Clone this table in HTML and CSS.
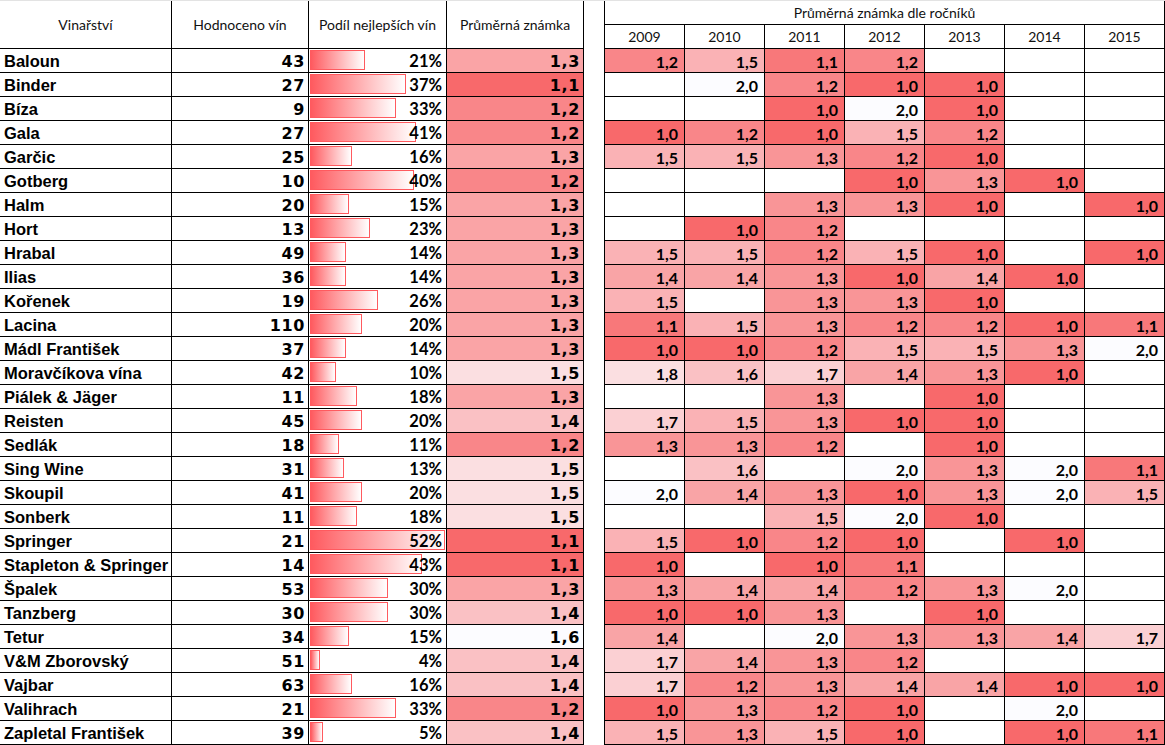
FILE: index.html
```html
<!DOCTYPE html>
<html lang="cs">
<head>
<meta charset="utf-8">
<title>Vinařství</title>
<link rel="stylesheet" href="styles.css">
</head>
<body>
<div class="sheet">
  <div class="left">
    <div class="hd">Vinařství</div>
    <div class="hd">Hodnoceno vín</div>
    <div class="hd">Podíl nejlepších vín</div>
    <div class="hd">Průměrná známka</div>

    <div class="name">Baloun</div><div class="num">43</div><div class="pct"><span class="bar" style="width:55px"></span><span class="pv">21%</span></div><div class="mark m13">1,3</div>
    <div class="name">Binder</div><div class="num">27</div><div class="pct"><span class="bar" style="width:96px"></span><span class="pv">37%</span></div><div class="mark m11">1,1</div>
    <div class="name">Bíza</div><div class="num">9</div><div class="pct"><span class="bar" style="width:86px"></span><span class="pv">33%</span></div><div class="mark m12">1,2</div>
    <div class="name">Gala</div><div class="num">27</div><div class="pct"><span class="bar" style="width:106px"></span><span class="pv">41%</span></div><div class="mark m12">1,2</div>
    <div class="name">Garčic</div><div class="num">25</div><div class="pct"><span class="bar" style="width:42px"></span><span class="pv">16%</span></div><div class="mark m13">1,3</div>
    <div class="name">Gotberg</div><div class="num">10</div><div class="pct"><span class="bar" style="width:104px"></span><span class="pv">40%</span></div><div class="mark m12">1,2</div>
    <div class="name">Halm</div><div class="num">20</div><div class="pct"><span class="bar" style="width:39px"></span><span class="pv">15%</span></div><div class="mark m13">1,3</div>
    <div class="name">Hort</div><div class="num">13</div><div class="pct"><span class="bar" style="width:60px"></span><span class="pv">23%</span></div><div class="mark m13">1,3</div>
    <div class="name">Hrabal</div><div class="num">49</div><div class="pct"><span class="bar" style="width:36px"></span><span class="pv">14%</span></div><div class="mark m13">1,3</div>
    <div class="name">Ilias</div><div class="num">36</div><div class="pct"><span class="bar" style="width:36px"></span><span class="pv">14%</span></div><div class="mark m13">1,3</div>
    <div class="name">Kořenek</div><div class="num">19</div><div class="pct"><span class="bar" style="width:68px"></span><span class="pv">26%</span></div><div class="mark m13">1,3</div>
    <div class="name">Lacina</div><div class="num">110</div><div class="pct"><span class="bar" style="width:52px"></span><span class="pv">20%</span></div><div class="mark m13">1,3</div>
    <div class="name">Mádl František</div><div class="num">37</div><div class="pct"><span class="bar" style="width:36px"></span><span class="pv">14%</span></div><div class="mark m13">1,3</div>
    <div class="name">Moravčíkova vína</div><div class="num">42</div><div class="pct"><span class="bar" style="width:26px"></span><span class="pv">10%</span></div><div class="mark m15">1,5</div>
    <div class="name">Piálek &amp; Jäger</div><div class="num">11</div><div class="pct"><span class="bar" style="width:47px"></span><span class="pv">18%</span></div><div class="mark m13">1,3</div>
    <div class="name">Reisten</div><div class="num">45</div><div class="pct"><span class="bar" style="width:52px"></span><span class="pv">20%</span></div><div class="mark m14">1,4</div>
    <div class="name">Sedlák</div><div class="num">18</div><div class="pct"><span class="bar" style="width:29px"></span><span class="pv">11%</span></div><div class="mark m12">1,2</div>
    <div class="name">Sing Wine</div><div class="num">31</div><div class="pct"><span class="bar" style="width:34px"></span><span class="pv">13%</span></div><div class="mark m15">1,5</div>
    <div class="name">Skoupil</div><div class="num">41</div><div class="pct"><span class="bar" style="width:52px"></span><span class="pv">20%</span></div><div class="mark m15">1,5</div>
    <div class="name">Sonberk</div><div class="num">11</div><div class="pct"><span class="bar" style="width:47px"></span><span class="pv">18%</span></div><div class="mark m15">1,5</div>
    <div class="name">Springer</div><div class="num">21</div><div class="pct"><span class="bar" style="width:135px"></span><span class="pv">52%</span></div><div class="mark m11">1,1</div>
    <div class="name">Stapleton &amp; Springer</div><div class="num">14</div><div class="pct"><span class="bar" style="width:112px"></span><span class="pv">43%</span></div><div class="mark m11">1,1</div>
    <div class="name">Špalek</div><div class="num">53</div><div class="pct"><span class="bar" style="width:78px"></span><span class="pv">30%</span></div><div class="mark m13">1,3</div>
    <div class="name">Tanzberg</div><div class="num">30</div><div class="pct"><span class="bar" style="width:78px"></span><span class="pv">30%</span></div><div class="mark m14">1,4</div>
    <div class="name">Tetur</div><div class="num">34</div><div class="pct"><span class="bar" style="width:39px"></span><span class="pv">15%</span></div><div class="mark m16">1,6</div>
    <div class="name">V&amp;M Zborovský</div><div class="num">51</div><div class="pct"><span class="bar" style="width:10px"></span><span class="pv">4%</span></div><div class="mark m14">1,4</div>
    <div class="name">Vajbar</div><div class="num">63</div><div class="pct"><span class="bar" style="width:42px"></span><span class="pv">16%</span></div><div class="mark m14">1,4</div>
    <div class="name">Valihrach</div><div class="num">21</div><div class="pct"><span class="bar" style="width:86px"></span><span class="pv">33%</span></div><div class="mark m12">1,2</div>
    <div class="name">Zapletal František</div><div class="num">39</div><div class="pct"><span class="bar" style="width:13px"></span><span class="pv">5%</span></div><div class="mark m14">1,4</div>
  </div>

  <div class="right">
    <div class="title">Průměrná známka dle ročníků</div>
    <div class="yr">2009</div><div class="yr">2010</div><div class="yr">2011</div><div class="yr">2012</div><div class="yr">2013</div><div class="yr">2014</div><div class="yr">2015</div>

    <div class="v c12">1,2</div><div class="v c15">1,5</div><div class="v c11">1,1</div><div class="v c12">1,2</div><div class="v"></div><div class="v"></div><div class="v"></div>
    <div class="v"></div><div class="v c20">2,0</div><div class="v c12">1,2</div><div class="v c10">1,0</div><div class="v c10">1,0</div><div class="v"></div><div class="v"></div>
    <div class="v"></div><div class="v"></div><div class="v c10">1,0</div><div class="v c20">2,0</div><div class="v c10">1,0</div><div class="v"></div><div class="v"></div>
    <div class="v c10">1,0</div><div class="v c12">1,2</div><div class="v c10">1,0</div><div class="v c15">1,5</div><div class="v c12">1,2</div><div class="v"></div><div class="v"></div>
    <div class="v c15">1,5</div><div class="v c15">1,5</div><div class="v c13">1,3</div><div class="v c12">1,2</div><div class="v c10">1,0</div><div class="v"></div><div class="v"></div>
    <div class="v"></div><div class="v"></div><div class="v"></div><div class="v c10">1,0</div><div class="v c13">1,3</div><div class="v c10">1,0</div><div class="v"></div>
    <div class="v"></div><div class="v"></div><div class="v c13">1,3</div><div class="v c13">1,3</div><div class="v c10">1,0</div><div class="v"></div><div class="v c10">1,0</div>
    <div class="v"></div><div class="v c10">1,0</div><div class="v c12">1,2</div><div class="v"></div><div class="v"></div><div class="v"></div><div class="v"></div>
    <div class="v c15">1,5</div><div class="v c15">1,5</div><div class="v c12">1,2</div><div class="v c15">1,5</div><div class="v c10">1,0</div><div class="v"></div><div class="v c10">1,0</div>
    <div class="v c14">1,4</div><div class="v c14">1,4</div><div class="v c13">1,3</div><div class="v c10">1,0</div><div class="v c14">1,4</div><div class="v c10">1,0</div><div class="v"></div>
    <div class="v c15">1,5</div><div class="v"></div><div class="v c13">1,3</div><div class="v c13">1,3</div><div class="v c10">1,0</div><div class="v"></div><div class="v"></div>
    <div class="v c11">1,1</div><div class="v c15">1,5</div><div class="v c13">1,3</div><div class="v c12">1,2</div><div class="v c12">1,2</div><div class="v c10">1,0</div><div class="v c11">1,1</div>
    <div class="v c10">1,0</div><div class="v c10">1,0</div><div class="v c12">1,2</div><div class="v c15">1,5</div><div class="v c15">1,5</div><div class="v c13">1,3</div><div class="v c20">2,0</div>
    <div class="v c18">1,8</div><div class="v c16">1,6</div><div class="v c17">1,7</div><div class="v c14">1,4</div><div class="v c13">1,3</div><div class="v c10">1,0</div><div class="v"></div>
    <div class="v"></div><div class="v"></div><div class="v c13">1,3</div><div class="v"></div><div class="v c10">1,0</div><div class="v"></div><div class="v"></div>
    <div class="v c17">1,7</div><div class="v c15">1,5</div><div class="v c13">1,3</div><div class="v c10">1,0</div><div class="v c10">1,0</div><div class="v"></div><div class="v"></div>
    <div class="v c13">1,3</div><div class="v c13">1,3</div><div class="v c12">1,2</div><div class="v"></div><div class="v c10">1,0</div><div class="v"></div><div class="v"></div>
    <div class="v"></div><div class="v c16">1,6</div><div class="v"></div><div class="v c20">2,0</div><div class="v c13">1,3</div><div class="v c20">2,0</div><div class="v c11">1,1</div>
    <div class="v c20">2,0</div><div class="v c14">1,4</div><div class="v c13">1,3</div><div class="v c10">1,0</div><div class="v c13">1,3</div><div class="v c20">2,0</div><div class="v c15">1,5</div>
    <div class="v"></div><div class="v"></div><div class="v c15">1,5</div><div class="v c20">2,0</div><div class="v c10">1,0</div><div class="v"></div><div class="v"></div>
    <div class="v c15">1,5</div><div class="v c10">1,0</div><div class="v c12">1,2</div><div class="v c10">1,0</div><div class="v"></div><div class="v c10">1,0</div><div class="v"></div>
    <div class="v c10">1,0</div><div class="v"></div><div class="v c10">1,0</div><div class="v c11">1,1</div><div class="v"></div><div class="v"></div><div class="v"></div>
    <div class="v c13">1,3</div><div class="v c14">1,4</div><div class="v c14">1,4</div><div class="v c12">1,2</div><div class="v c13">1,3</div><div class="v c20">2,0</div><div class="v"></div>
    <div class="v c10">1,0</div><div class="v c10">1,0</div><div class="v c13">1,3</div><div class="v"></div><div class="v c10">1,0</div><div class="v"></div><div class="v"></div>
    <div class="v c14">1,4</div><div class="v"></div><div class="v c20">2,0</div><div class="v c13">1,3</div><div class="v c13">1,3</div><div class="v c14">1,4</div><div class="v c17">1,7</div>
    <div class="v c17">1,7</div><div class="v c14">1,4</div><div class="v c13">1,3</div><div class="v c12">1,2</div><div class="v"></div><div class="v"></div><div class="v"></div>
    <div class="v c17">1,7</div><div class="v c12">1,2</div><div class="v c13">1,3</div><div class="v c14">1,4</div><div class="v c14">1,4</div><div class="v c10">1,0</div><div class="v c10">1,0</div>
    <div class="v c10">1,0</div><div class="v c13">1,3</div><div class="v c12">1,2</div><div class="v c10">1,0</div><div class="v"></div><div class="v c20">2,0</div><div class="v"></div>
    <div class="v c15">1,5</div><div class="v c13">1,3</div><div class="v c15">1,5</div><div class="v c10">1,0</div><div class="v"></div><div class="v c10">1,0</div><div class="v c11">1,1</div>
  </div>
</div>
</body>
</html>
```

FILE: styles.css
```css
* { box-sizing: border-box; }
html, body { margin: 0; padding: 0; background: #fff; }
body { width: 1165px; height: 745px; overflow: hidden; color: #000; }

.sheet {
  display: flex;
  align-items: flex-start;
  gap: 20px;
  border-top: 1px solid #e3e3e3;
}

.left {
  display: grid;
  grid-template-columns: 171px 136px 137px 136px;
  grid-template-rows: 47px;
  grid-auto-rows: 23px;
  gap: 1px;
  background: #000;
  padding: 0 1px 1px 0;
}

.right {
  display: grid;
  grid-template-columns: repeat(7, 79px);
  grid-template-rows: 23px 23px;
  grid-auto-rows: 23px;
  gap: 1px;
  background: #000;
  padding: 0 1px 1px 1px;
}

.left > div, .right > div { background: #fff; }

.hd, .title, .yr {
  font-family: Lato, "Open Sans", sans-serif;
  font-size: 14px;
  display: flex;
  align-items: center;
  justify-content: center;
  color: #111;
}
.title { grid-column: 1 / -1; }

.name {
  font-family: "Liberation Sans", Arial, sans-serif;
  font-weight: bold;
  font-size: 16.5px;
  display: flex;
  align-items: center;
  padding: 1px 0 0 4px;
  white-space: nowrap;
}

.num, .mark {
  font-family: "DejaVu Sans", Verdana, sans-serif;
  font-weight: bold;
  font-size: 16px;
  letter-spacing: 0.6px;
  display: flex;
  align-items: center;
  justify-content: flex-end;
  padding: 1px 3px 0 0;
}
.pct {
  position: relative;
  font-family: Lato, "Open Sans", sans-serif;
  font-weight: bold;
  font-size: 16.5px;
  display: flex;
  align-items: center;
  justify-content: flex-end;
  padding: 1px 4px 0 0;
}
.bar {
  position: absolute;
  left: 1px;
  top: 1px;
  height: 20px;
  border: 1px solid #ff5a5f;
  background: linear-gradient(to right, #ff5a5f, #ffffff);
}
.pv { position: relative; }

.v {
  font-family: Lato, "Open Sans", sans-serif;
  font-weight: bold;
  font-size: 16px;
  display: flex;
  align-items: center;
  justify-content: flex-end;
  padding: 1px 6px 0 0;
}

/* left column colour scale: 1.1 -> 1.6 */
.left > .m11 { background: #f8696b; }
.left > .m12 { background: #f98689; }
.left > .m13 { background: #faa4a6; }
.left > .m14 { background: #fac1c4; }
.left > .m15 { background: #fbdfe1; }
.left > .m16 { background: #fcfcff; }

/* year columns colour scale: 1.0 -> 2.0 */
.right > .c10 { background: #f8696b; }
.right > .c11 { background: #f8787a; }
.right > .c12 { background: #f98689; }
.right > .c13 { background: #f99597; }
.right > .c14 { background: #f9a4a6; }
.right > .c15 { background: #fab2b5; }
.right > .c16 { background: #fac1c4; }
.right > .c17 { background: #fbd0d3; }
.right > .c18 { background: #fbdfe1; }
.right > .c19 { background: #fcedf0; }
.right > .c20 { background: #fcfcff; }
```
